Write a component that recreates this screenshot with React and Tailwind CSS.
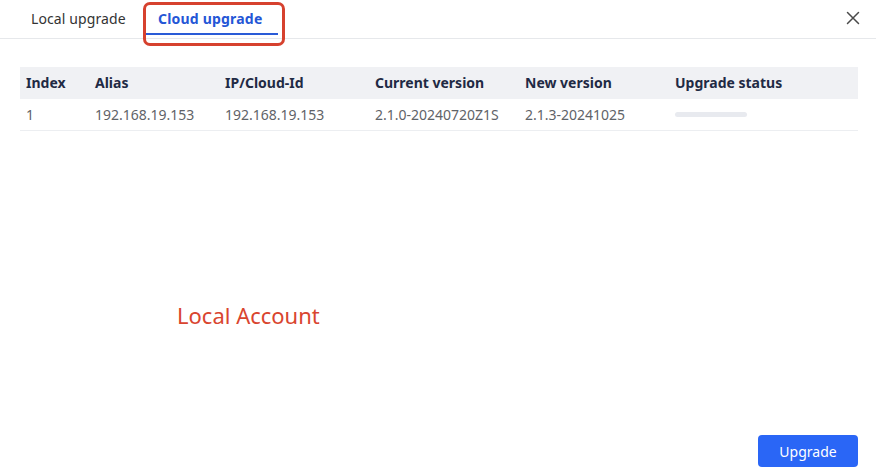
import React from "react";

const cols = [
  { h: "Index", v: "1", w: "w-[69px]" },
  { h: "Alias", v: "192.168.19.153", w: "w-[130px]" },
  { h: "IP/Cloud-Id", v: "192.168.19.153", w: "w-[150px]" },
  { h: "Current version", v: "2.1.0-20240720Z1S", w: "w-[150px]" },
  { h: "New version", v: "2.1.3-20241025", w: "w-[150px]" },
];

export default function App() {
  return (
    <div
      className="w-[876px] h-[469px] bg-white flex flex-col relative overflow-hidden"
      style={{ fontFamily: '"Noto Sans", "Liberation Sans", sans-serif' }}
    >
      {/* Tabs bar */}
      <div className="h-[39px] border-b border-[#e6e8eb] flex items-stretch relative">
        <div className="flex items-stretch pl-[18px]">
          <div className="w-[127px] pl-[13px] flex items-center text-[14px] text-[#333] pb-[2px] tracking-[0.1px]">
            Local upgrade
          </div>
          <div className="w-[133px] pl-[13px] flex items-center text-[14px] font-bold text-[#2456d6] pb-[2px] relative tracking-[0.2px]">
            Cloud upgrade
            <div className="absolute left-0 right-0 bottom-[3px] h-[2px] bg-[#2a5bd7]" />
            <div className="absolute left-[-2px] right-[-7px] top-[2px] h-[44px] border-[3px] border-[#d6412e] rounded-[7px]" />
          </div>
        </div>
        <div className="ml-auto pr-[16px] flex items-center pb-[2px]">
          <svg width="14" height="14" viewBox="0 0 14 14">
            <path d="M1.5 1.5 L12.5 12.5 M12.5 1.5 L1.5 12.5" stroke="#4a4a4a" strokeWidth="1.5" strokeLinecap="round" />
          </svg>
        </div>
      </div>

      {/* Table */}
      <div className="mt-[28px] mr-[18px] ml-[20px]">
        <div className="flex h-[32px] items-center bg-[#f0f1f4] text-[14px] font-bold text-[#1f2a44] pb-[1px]">
          {cols.map((c) => (
            <div key={c.h} className={`${c.w} px-[6px] whitespace-nowrap`}>{c.h}</div>
          ))}
          <div className="flex-1 px-[6px] whitespace-nowrap">Upgrade status</div>
        </div>
        <div className="flex h-[32px] items-center border-b border-[#eceef1] text-[14px] text-[#5f6368]">
          {cols.map((c) => (
            <div key={c.h} className={`${c.w} px-[6px] whitespace-nowrap`}>{c.v}</div>
          ))}
          <div className="flex-1 px-[6px]">
            <div className="w-[72px] h-[5px] rounded-full bg-[#e8eaef]" />
          </div>
        </div>
      </div>

      {/* Annotation */}
      <div className="pl-[177px] mt-[170px] text-[22px] text-[#d9452f] leading-[28px]">
        Local Account
      </div>

      {/* Footer */}
      <div className="mt-auto flex justify-end pr-[18px] pb-[2px]">
        <button className="w-[100px] h-[32px] rounded-[4px] bg-[#2a66f6] text-white text-[14px]">
          Upgrade
        </button>
      </div>
    </div>
  );
}
